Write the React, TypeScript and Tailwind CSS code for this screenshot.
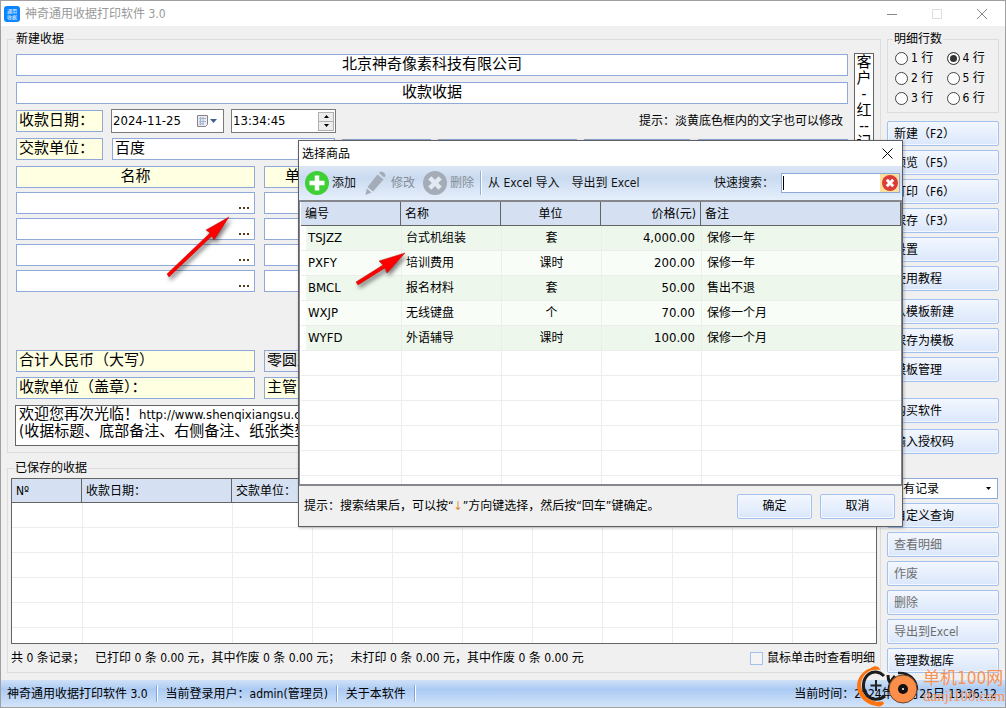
import React from "react";
import clsx from "clsx";

const ITEMS = [
  { code: "TSJZZ", name: "台式机组装", unit: "套", price: "4,000.00", note: "保修一年" },
  { code: "PXFY", name: "培训费用", unit: "课时", price: "200.00", note: "保修一年" },
  { code: "BMCL", name: "报名材料", unit: "套", price: "50.00", note: "售出不退" },
  { code: "WXJP", name: "无线键盘", unit: "个", price: "70.00", note: "保修一个月" },
  { code: "WYFD", name: "外语辅导", unit: "课时", price: "100.00", note: "保修一个月" },
];

const SIDE_GROUPS = [
  {
    className: "mt-2",
    labels: ["新建（F2）", "预览（F5）", "打印（F6）", "保存（F3）", "设置", "使用教程"],
  },
  { className: "mt-2", labels: ["从模板新建", "保存为模板", "模板管理"] },
  { className: "mt-4", labels: ["购买软件"] },
  { className: "mt-1.5", labels: ["输入授权码"] },
];

const RECORD_ACTIONS = [
  { label: "自定义查询", disabled: false },
  { label: "查看明细", disabled: true },
  { label: "作废", disabled: true },
  { label: "删除", disabled: true },
  { label: "导出到Excel", disabled: true },
  { label: "管理数据库", disabled: false },
];

const field =
  "block h-[22px] min-w-0 rounded-none border border-[#8faad8] px-0.5 pb-[5px] text-[15px] leading-4 outline-none";
const glossy =
  "block h-[25px] rounded-xs border border-[#a3c1ee] bg-linear-to-b from-[#f3f7fe] to-[#dae7fb] shadow-[inset_0_0_0_1px_#f4f8fe]";

function Field({
  label,
  value = "",
  className,
}: {
  label: string;
  value?: string;
  className?: string;
}) {
  return (
    <input
      type="text"
      aria-label={label}
      defaultValue={value}
      className={clsx(field, className)}
    />
  );
}

function SideButton({ label, disabled }: { label: string; disabled?: boolean }) {
  return (
    <button
      type="button"
      disabled={disabled}
      className={clsx(glossy, "w-full pl-1.5 text-left", disabled && "text-[#6d6d6d]")}
    >
      {label}
    </button>
  );
}

function TitleBar() {
  return (
    <header className="flex h-[25px] items-center bg-white pl-[3px] text-[#999]">
      <svg width="16" height="16" viewBox="0 0 16 16" aria-hidden="true">
        <rect width="16" height="16" rx="3" fill="#0a84ff" />
        <g fill="#fff" fontSize="5" fontFamily="Noto Sans CJK SC, sans-serif">
          <text x="3" y="7">通用</text>
          <text x="3" y="13">收据</text>
        </g>
      </svg>
      <h1 className="ml-[5px] flex-1">神奇通用收据打印软件 3.0</h1>
      <button type="button" aria-label="最小化" className="w-[45px]">
        <svg width="10" height="10" className="mx-auto" stroke="#888">
          <path d="M0 5.5h10" />
        </svg>
      </button>
      <button type="button" aria-label="最大化" className="w-[45px]">
        <svg width="10" height="10" className="mx-auto" fill="none" stroke="#ddd">
          <path d="M.5.5h9v9h-9z" />
        </svg>
      </button>
      <button type="button" aria-label="关闭" className="w-[46px]">
        <svg width="10" height="10" className="mx-auto" stroke="#888">
          <path d="M0 0l10 10M10 0L0 10" />
        </svg>
      </button>
    </header>
  );
}

function ReceiptForm() {
  return (
    <fieldset className="flex min-w-0 border border-[#dcdcdc] pr-[6px] pb-[6px] pl-2">
      <legend className="ml-[-1px] px-px leading-[14px]">新建收据</legend>
      <div className="mt-2 flex min-w-0 flex-1 flex-col">
        <Field label="公司" value="北京神奇像素科技有限公司" className="bg-white text-center" />
        <Field label="标题" value="收款收据" className="mt-1.5 bg-white text-center" />
        <div className="mt-[5px] flex items-center">
          <Field label="日期标签" value="收款日期：" className="w-[87px] bg-[#ffffe1]" />
          <div className="ml-2 flex h-6 w-[113px] items-center border border-[#7a7a7a] bg-white">
            <input
              type="text"
              aria-label="收款日期"
              defaultValue="2024-11-25"
              className="w-[84px] pl-px text-[13px] outline-none"
            />
            <button type="button" aria-label="选择日期">
              <svg width="24" height="14" viewBox="0 0 24 14">
                <path d="M1.5 1.5h10v9l-2 2h-8z" fill="#e9edf3" stroke="#8a8088" />
                <path d="M3 4.5h7M3 7.5h7M3 10h5M4.500 3v8M7 3v8" stroke="#a3b4cc" />
                <path d="M14 5h7l-3.500 4z" fill="#41618f" />
              </svg>
            </button>
          </div>
          <div className="ml-[7px] flex h-6 w-[105px] items-center border border-[#7a7a7a] bg-white">
            <input
              type="text"
              aria-label="收款时间"
              defaultValue="13:34:45"
              className="w-[86px] pl-px text-[13px] outline-none"
            />
            <div className="flex w-4 flex-col">
              <button
                type="button"
                aria-label="增加"
                className="h-[10px] border border-[#b0b0b0] bg-[#ececec]"
              >
                <svg width="5" height="3" className="mx-auto">
                  <path d="M0 3h5L2.500 0z" />
                </svg>
              </button>
              <button
                type="button"
                aria-label="减少"
                className="h-[9px] border border-t-0 border-[#b0b0b0] bg-[#ececec]"
              >
                <svg width="5" height="3" className="mx-auto">
                  <path d="M0 0h5L2.500 3z" />
                </svg>
              </button>
            </div>
          </div>
          <p className="ml-auto pr-[5px]">提示：淡黄底色框内的文字也可以修改</p>
        </div>
        <div className="mt-[5px] flex">
          <Field label="单位标签" value="交款单位：" className="w-[87px] bg-[#ffffe1]" />
          <Field label="交款单位" value="百度" className="ml-[9px] w-[223px] bg-white" />
          <Field label="附加标签一" className="mt-px ml-[7px] w-[89px] bg-[#ffffe1]" />
          <Field label="附加内容一" className="mt-px ml-[7px] w-[139px] bg-white" />
          <Field label="附加标签二" className="mt-px ml-[7px] w-[106px] bg-[#ffffe1]" />
          <Field label="附加内容二" className="mt-px ml-2 flex-1 bg-white" />
        </div>

        <div className="mt-[5px] flex gap-[9px]">
          <Field label="名称标题" value="名称" className="w-[239px] bg-[#ffffe1] text-center" />
          <Field label="单位标题" value="单位" className="w-[72px] bg-[#ffffe1] text-center" />
          <Field label="金额标题" value="金额" className="flex-1 bg-[#ffffe1] text-center" />
        </div>
        {[1, 2, 3, 4].map((n) => (
          <div key={n} className="mt-1 flex gap-[9px]">
            <div className="flex h-[22px] w-[239px] border border-[#8faad8] bg-white">
              <input
                type="text"
                aria-label={`名称 ${n}`}
                className="min-w-0 flex-1 px-1 text-[15px] outline-none"
              />
              <button type="button" aria-label="选择商品" className="w-[18px]">
                <svg width="12" height="4" className="mt-[9px] ml-[2px]" fill="#5a3a1a">
                  <path d="M1 1h2v2h-2zM5 1h2v2h-2zM9 1h2v2h-2z" />
                </svg>
              </button>
            </div>
            <Field label={`单位 ${n}`} className="w-[72px] bg-white" />
            <Field label={`金额 ${n}`} className="flex-1 bg-white" />
          </div>
        ))}

        <div className="mt-[58px] flex gap-[9px]">
          <Field label="合计标签" value="合计人民币（大写）" className="w-[239px] bg-[#ffffe1]" />
          <Field label="合计大写" value="零圆整" className="flex-1" />
        </div>
        <div className="mt-[5px] flex gap-[9px]">
          <Field
            label="收款单位标签"
            value="收款单位（盖章）："
            className="w-[239px] bg-[#ffffe1]"
          />
          <Field label="主管" value="主管：" className="flex-1 bg-[#ffffe1]" />
        </div>
        <div className="mt-1.5 ml-[-1px] h-[41px] overflow-hidden border border-[#646464] bg-white pl-[3px] text-[15px] leading-4 whitespace-nowrap">
          <p>
            欢迎您再次光临！<span className="text-[13px]">http://www.shenqixiangsu.com</span>
          </p>
          <p>(收据标题、底部备注、右侧备注、纸张类型都可以修改)</p>
        </div>
      </div>
      <textarea
        aria-label="右侧备注"
        defaultValue={"客\n户\n-\n红\n--\n记\n账"}
        className="mt-[7px] ml-1.5 w-5 shrink-0 resize-none overflow-hidden border border-[#646464] bg-white text-center text-[15px] leading-4 outline-none"
      />
    </fieldset>
  );
}

function SavedReceipts() {
  const cell = "border-b border-l border-[#ededed] first:border-l-0";
  return (
    <fieldset className="mt-[8px] min-w-0 border border-[#dcdcdc] pb-[5px]">
      <legend className="ml-[6px] px-px leading-[14px]">已保存的收据</legend>
      <div className="mx-[3px] mt-[3px] h-[166px] overflow-hidden border border-[#646464] bg-white">
        <table className="w-full table-fixed border-separate border-spacing-0">
          <colgroup>
            <col className="w-[70px]" />
            <col className="w-[150px]" />
            <col className="w-[80px]" />
            <col className="w-[80px]" />
            <col className="w-[70px]" />
            <col className="w-[70px]" />
            <col className="w-[70px]" />
            <col className="w-[70px]" />
            <col className="w-[60px]" />
            <col className="w-[60px]" />
            <col />
          </colgroup>
          <thead>
            <tr className="h-6 bg-[#d5e1f2] text-left">
              {["Nº", "收款日期：", "交款单位：", "", "", "", "", "", "", "", ""].map((h, i) => (
                <th
                  key={i}
                  className="border-r border-b border-[#646464] pl-1 font-normal whitespace-nowrap last:border-r-0"
                >
                  {h}
                </th>
              ))}
            </tr>
          </thead>
          <tbody>
            {[0, 1, 2, 3, 4, 5].map((r) => (
              <tr key={r} className="h-[25px]">
                {[0, 1, 2, 3, 4, 5, 6, 7, 8, 9, 10].map((c) => (
                  <td key={c} className={cell} />
                ))}
              </tr>
            ))}
          </tbody>
        </table>
      </div>
      <div className="mt-[5px] flex h-[18px] items-center pr-[5px] pl-[3px]">
        <p className="flex-1 whitespace-pre">
          {"共 0 条记录；   已打印 0 条 0.00 元，其中作废 0 条 0.00 元；   未打印 0 条 0.00 元，其中作废 0 条 0.00 元"}
        </p>
        <label className="flex items-center gap-1">
          <input
            type="checkbox"
            className="size-[13px] appearance-none border border-[#a3c1ee] bg-[#f4f4f4]"
          />
          鼠标单击时查看明细
        </label>
      </div>
    </fieldset>
  );
}

function Sidebar() {
  return (
    <aside className="w-28 shrink-0">
      <fieldset className="border border-[#dcdcdc] pb-1 pl-[7px]">
        <legend className="ml-[-2px] px-px leading-[14px]">明细行数</legend>
        <div className="mt-0.5 grid grid-flow-col grid-cols-2 grid-rows-3">
          {[1, 2, 3, 4, 5, 6].map((n) => (
            <label key={n} className="flex h-5 items-center gap-[3px]">
              <input
                type="radio"
                name="rows"
                defaultChecked={n === 4}
                className="size-[13px] appearance-none rounded-full border border-[#444] bg-white checked:bg-[#333] checked:shadow-[inset_0_0_0_2px_#fff]"
              />
              {n} 行
            </label>
          ))}
        </div>
      </fieldset>
      {SIDE_GROUPS.map((group) => (
        <div key={group.labels[0]} className={clsx("flex flex-col gap-1", group.className)}>
          {group.labels.map((label) => (
            <SideButton key={label} label={label} />
          ))}
        </div>
      ))}
      <div className="relative mt-6 mr-px">
        <select
          aria-label="记录范围"
          className="block h-[21px] w-full appearance-none border border-[#8faad8] bg-white pl-[3px] outline-none"
        >
          <option>所有记录</option>
        </select>
        <svg
          width="5"
          height="3"
          className="pointer-events-none absolute top-[9px] right-[7px]"
          aria-hidden="true"
        >
          <path d="M0 0h5L2.500 3z" />
        </svg>
      </div>
      <div className="mt-1 flex flex-col gap-1">
        {RECORD_ACTIONS.map((a) => (
          <SideButton key={a.label} label={a.label} disabled={a.disabled} />
        ))}
      </div>
    </aside>
  );
}

function StatusBar() {
  const sep = "h-[17px] w-0.5 border-l border-[#7ea6da] bg-white";
  return (
    <footer className="flex h-[27px] items-center bg-linear-to-b from-[#cfe1f8] from-0% via-[#abcaf3] via-35% to-[#d3e4f9] pl-1.5">
      <span>神奇通用收据打印软件 3.0</span>
      <i className={clsx(sep, "mx-2")} />
      <span>当前登录用户：admin(管理员)</span>
      <i className={clsx(sep, "mx-2")} />
      <span>关于本软件</span>
      <i className={clsx(sep, "ml-2")} />
      <time className="ml-auto pr-2">当前时间：2024年11月25日 13:36:12</time>
    </footer>
  );
}

function GoodsDialog() {
  const head = "border-r border-b border-[#646464] px-1 font-normal";
  const cell = "border-b border-l border-[#ededed] first:border-l-0";
  return (
    <section
      role="dialog"
      aria-label="选择商品"
      className="absolute top-[139px] left-[297px] w-[605px] border border-[#5f6065] bg-[#f0f0f0] shadow-[1px_1px_3px_rgba(0,0,0,0.25)]"
    >
      <div className="flex h-[25px] items-center bg-white pl-[3px]">
        <h2 className="flex-1">选择商品</h2>
        <button type="button" aria-label="关闭对话框" className="px-[9px]">
          <svg width="11" height="11" stroke="#000">
            <path d="M.5.5l10 10M10.500.5l-10 10" />
          </svg>
        </button>
      </div>
      <div className="flex h-[34px] items-center bg-linear-to-b from-[#dce7f5] via-[#cadbf0] via-35% to-[#e6effb] pl-1.5 text-[#111]">
        <button type="button" className="flex items-center gap-[3px]">
          <svg width="24" height="24" viewBox="0 0 24 24">
            <circle cx="12" cy="12" r="12" fill="#3fd035" />
            <path d="M12 4.500v15M4.500 12h15" stroke="#fff" strokeWidth="4.500" />
          </svg>
          添加
        </button>
        <button type="button" disabled className="ml-2 flex items-center gap-[3px] text-[#868d96]">
          <svg width="24" height="24" viewBox="0 0 24 24" fill="#a3acb7">
            <path d="M13.500 3.500l6 5L9 20.500 3.500 16z" />
            <path d="M15 2l2-1.500c1-.6 5 2.500 4.500 4L20.300 6.500z" />
            <path d="M2.800 17.500L7.500 21.500 1.500 24z" />
          </svg>
          修改
        </button>
        <button type="button" disabled className="ml-2 flex items-center gap-[3px] text-[#868d96]">
          <svg width="24" height="24" viewBox="0 0 24 24">
            <circle cx="12" cy="12" r="12" fill="#a3acb7" />
            <path d="M6.800 6.800l10.400 10.400M17.200 6.800L6.800 17.200" stroke="#e3e9f1" strokeWidth="4.500" />
          </svg>
          删除
        </button>
        <i className="mx-1.5 h-6 w-0.5 border-l border-[#8fb1df] bg-white" />
        <button type="button">从 Excel 导入</button>
        <button type="button" className="ml-3">
          导出到 Excel
        </button>
        <label htmlFor="goods-search" className="ml-auto">
          快速搜索：
        </label>
        <div className="mr-[2px] ml-[7px] flex h-5 w-[119px] border border-[#8faad8] bg-white">
          <i className="my-[2px] ml-px w-px bg-black" />
          <input id="goods-search" type="text" className="min-w-0 flex-1 outline-none" />
          <button
            type="button"
            aria-label="清除"
            className="flex w-[19px] items-center justify-center bg-[#fbdf9b]"
          >
            <svg width="16" height="16" viewBox="0 0 16 16">
              <circle cx="8" cy="8" r="8" fill="#dc3b36" />
              <path d="M4.800 4.800l6.400 6.400M11.200 4.800l-6.400 6.400" stroke="#fff" strokeWidth="3" />
            </svg>
          </button>
        </div>
      </div>
      <div className="h-[286px] overflow-hidden border border-t-2 border-b-2 border-[#85878c] bg-white pl-px">
        <table className="w-[600px] table-fixed border-separate border-spacing-0">
          <colgroup>
            <col className="w-[100px]" />
            <col className="w-[100px]" />
            <col className="w-[100px]" />
            <col className="w-[100px]" />
            <col />
          </colgroup>
          <thead>
            <tr className="h-6 bg-[#d5e1f2] text-left">
              <th className={head}>编号</th>
              <th className={head}>名称</th>
              <th className={clsx(head, "text-center")}>单位</th>
              <th className={clsx(head, "text-right")}>价格(元)</th>
              <th className={head}>备注</th>
            </tr>
          </thead>
          <tbody>
            {ITEMS.map((item, i) => (
              <tr
                key={item.code}
                className={clsx("h-[25px]", i % 2 ? "bg-[#f8fdf8]" : "bg-[#eef7ec]")}
              >
                <td className={clsx(cell, "pl-[7px] text-[13px] leading-4 shadow-[inset_5px_0_0_#fff]")}>
                  {item.code}
                </td>
                <td className={clsx(cell, "pl-1")}>{item.name}</td>
                <td className={clsx(cell, "text-center")}>{item.unit}</td>
                <td className={clsx(cell, "pr-1.5 text-right text-[13px] leading-4")}>{item.price}</td>
                <td className={clsx(cell, "pl-[5px]")}>{item.note}</td>
              </tr>
            ))}
            {[0, 1, 2, 3, 4, 5].map((r) => (
              <tr key={r} className="h-[25px]">
                {[0, 1, 2, 3, 4].map((c) => (
                  <td key={c} className={cell} />
                ))}
              </tr>
            ))}
          </tbody>
        </table>
      </div>
      <div className="flex h-10 items-center pr-[7px] pl-[5px]">
        <p className="flex-1">
          提示：搜索结果后，可以按“<span className="text-[#d98a2b]">↓</span>
          ”方向键选择，然后按“回车”键确定。
        </p>
        <button type="button" className={clsx(glossy, "w-[75px]")}>
          确定
        </button>
        <button type="button" className={clsx(glossy, "ml-2 w-[75px]")}>
          取消
        </button>
      </div>
    </section>
  );
}

// Red pointer with a soft shadow, tip at the upper right
function Arrow({ className, shape, viewBox }: { className: string; shape: string; viewBox: string }) {
  return (
    <svg className={clsx("pointer-events-none absolute", className)} viewBox={viewBox} aria-hidden="true">
      <path
        d={shape}
        fill="#ff0000"
        stroke="#b01010"
        strokeWidth="0.500"
        className="drop-shadow-[2px_3px_2px_rgba(0,0,0,0.5)]"
      />
    </svg>
  );
}

function Watermark() {
  return (
    <div className="pointer-events-none absolute right-0 bottom-0 flex h-[43px] w-[150px] items-center">
      <svg width="64" height="43" viewBox="0 0 64 43" className="shrink-0" fill="none">
        <path
          d="M16 4C19 1 25 2 25 6C14 4 7 11 6 20C6 31 14 36 22 38C27 37 29 38 29 39C28 42 24 43 21 42C9 40 2 31 2 21C3 12 9 6 16 4Z"
          fill="#ff7410"
        />
        <path
          d="M29 12C24 7 18 7 14 10C7 15 7 26 12 31C17 37 25 36 30 32"
          stroke="#1c1c1c"
          strokeWidth="3"
        />
        <path d="M21 16v11M15.500 21.500h11" stroke="#222" strokeWidth="2" />
        <path d="M33 11C33 17 35 20 39 20M40 12C37 15 34 20 34 27" stroke="#1c1c1c" strokeWidth="3" />
        <path d="M43 9C53 8 62 15 62 26" stroke="#1c1c1c" strokeWidth="2.500" />
        <circle cx="48" cy="25" r="14" fill="#fb8f49" stroke="#6d4026" strokeWidth="1" />
        <circle cx="48" cy="25" r="5" fill="#111" />
        <circle cx="48" cy="25" r="1" fill="#fff" />
      </svg>
      <div className="ml-1 whitespace-nowrap text-[#f79256]">
        <p className="text-[17px] leading-5">单机100网</p>
        <p className="font-['Liberation_Serif',serif] text-[15px] leading-4">danji100.com</p>
      </div>
    </div>
  );
}

export default function App() {
  return (
    <div className="relative flex min-h-screen flex-col overflow-hidden border border-[#a0a0a0] bg-[#f0f0f0] font-['DejaVu_Sans_Condensed','Noto_Sans_CJK_SC',sans-serif] text-xs leading-4 text-black">
      <TitleBar />
      <main className="flex flex-1 gap-1.5 p-1.5">
        <div className="min-w-0 flex-1">
          <ReceiptForm />
          <SavedReceipts />
        </div>
        <Sidebar />
      </main>
      <StatusBar />
      <GoodsDialog />
      <Arrow
        className="top-[212px] left-[163px] h-[72px] w-[72px]"
        viewBox="164 213 72 72"
        shape="M229 217L206 230L210 233L167 274L169 277L212 236L214 240Z"
      />
      <Arrow
        className="top-[249px] left-[351px] h-[42px] w-[60px]"
        viewBox="352 250 60 42"
        shape="M405 253L379 261L383 265L356 282L358 285L385 268L387 273Z"
      />
      <Watermark />
    </div>
  );
}
